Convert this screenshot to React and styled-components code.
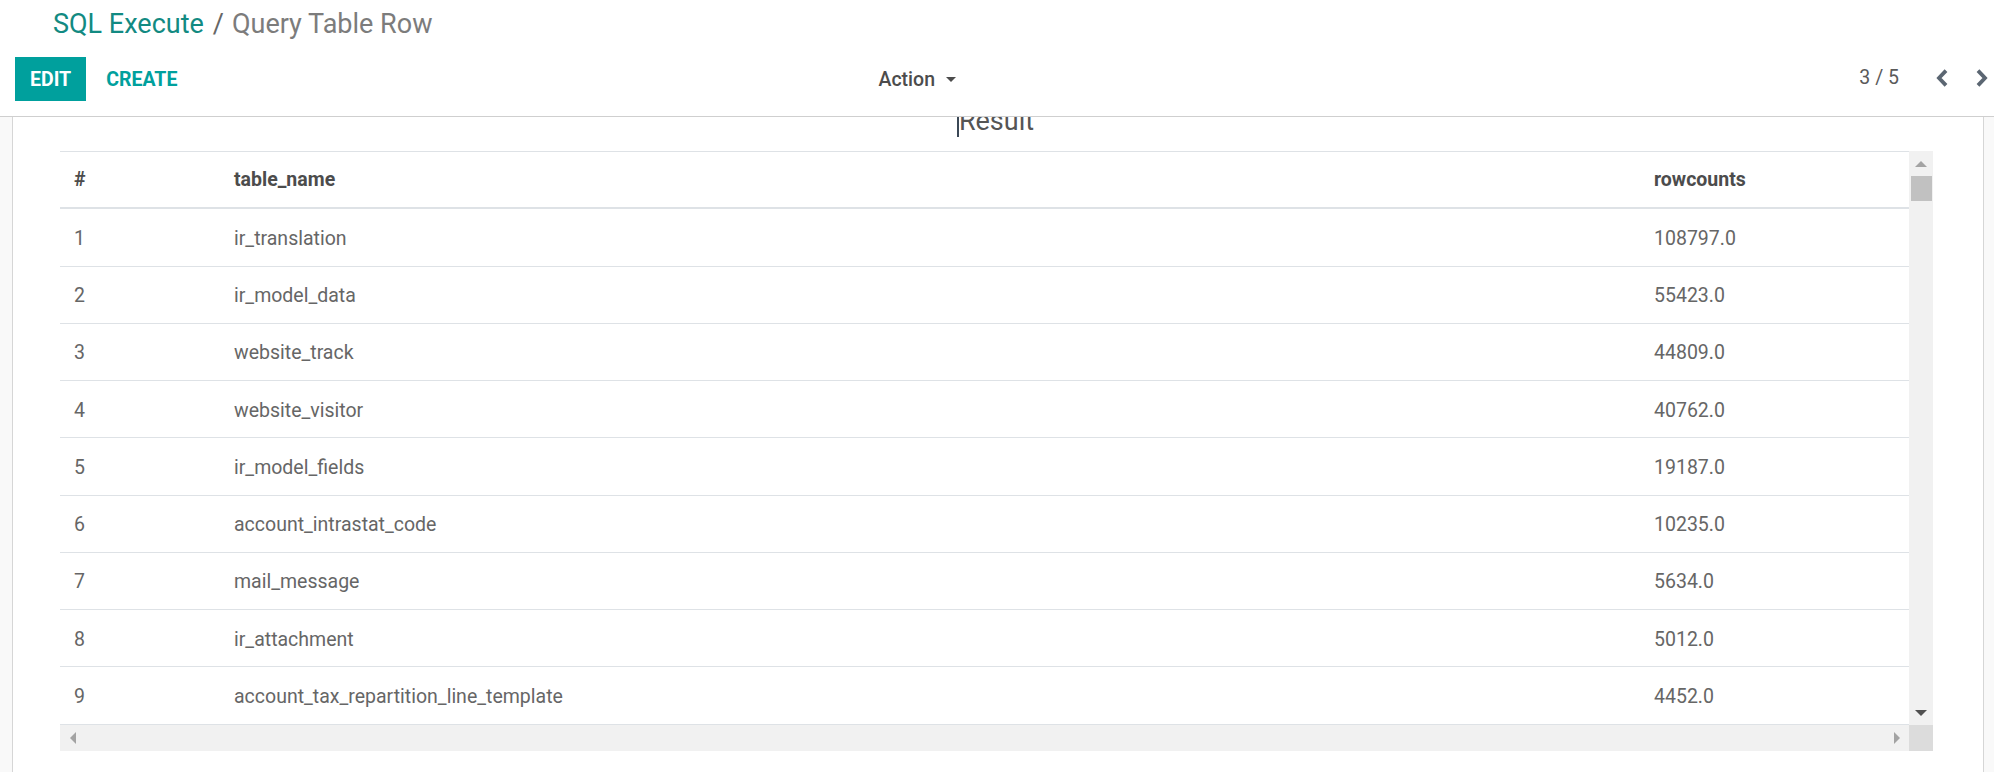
import React, { useLayoutEffect, useRef } from "react";
import styled, { createGlobalStyle } from "styled-components";

const GlobalStyle = createGlobalStyle`
  html, body { margin: 0; padding: 0; }
  body {
    font-family: Roboto, "Noto Sans", "Liberation Sans", sans-serif;
    background: #ffffff;
    -webkit-font-smoothing: antialiased;
  }
  * { box-sizing: border-box; }
`;

const Page = styled.div`
  height: 772px;
  display: flex;
  flex-direction: column;
  overflow: hidden;
`;

const ControlPanel = styled.header`
  flex-shrink: 0;
  background: #ffffff;
  border-bottom: 1px solid #cfcfcf;
  padding: 8px 0 15px;
  display: flex;
  flex-direction: column;
`;

const Breadcrumb = styled.nav`
  display: flex;
  align-items: baseline;
  padding-left: 53px;
  font-size: 27px;
  line-height: 32px;
`;

const CrumbLink = styled.a`
  color: #128a82;
  text-decoration: none;
`;

const CrumbSep = styled.span`
  color: #666666;
  margin: 0 8px 0 9px;
`;

const CrumbActive = styled.span`
  color: #7c7c7c;
`;

const BottomRow = styled.div`
  margin-top: 17px;
  height: 44px;
  display: flex;
`;

const LeftHalf = styled.div`
  width: 50%;
  display: flex;
  align-items: center;
  justify-content: space-between;
  padding-left: 15px;
`;

const ButtonGroup = styled.div`
  display: flex;
  align-items: center;
  gap: 5px;
  height: 100%;
`;

const Button = styled.button`
  height: 44px;
  padding: 0 15px;
  border: none;
  border-radius: 0;
  font-family: inherit;
  font-size: 19.5px;
  font-weight: 700;
  text-transform: uppercase;
  cursor: pointer;
  background: ${(p) => (p.$primary ? "#00a09d" : "transparent")};
  color: ${(p) => (p.$primary ? "#ffffff" : "#00a09d")};
`;

const ActionToggle = styled.button`
  display: flex;
  align-items: center;
  border: none;
  background: transparent;
  padding: 0 12px;
  margin-right: 29px;
  font-family: inherit;
  font-size: 19.5px;
  font-weight: 500;
  color: #4c4c4c;
  cursor: pointer;
`;

const Caret = styled.span`
  display: inline-block;
  margin-left: 11px;
  width: 0;
  height: 0;
  border-left: 5px solid transparent;
  border-right: 5px solid transparent;
  border-top: 5px solid #4c4c4c;
`;

const RightHalf = styled.div`
  width: 50%;
  display: flex;
  align-items: center;
  justify-content: flex-end;
  padding-right: 6px;
`;

const PagerValue = styled.span`
  font-size: 19.5px;
  color: #5a5a5a;
  margin-right: 37px;
  margin-top: -3px;
`;

const PagerButton = styled.button`
  display: flex;
  padding: 0;
  border: none;
  background: transparent;
  cursor: pointer;
  margin-top: -3px;
  & + & { margin-left: 28px; }
`;

const Body = styled.main`
  flex: 1;
  overflow: hidden;
  background: #f9f9f9;
  padding: 0 10px 0 12px;
`;

const Sheet = styled.section`
  background: #ffffff;
  border-left: 1px solid #d6d6d6;
  border-right: 1px solid #d6d6d6;
  padding: 24px 50px 48px 47px;
`;

const Title = styled.h2`
  margin: 0 0 14px;
  text-align: center;
  font-size: 27px;
  line-height: 32px;
  font-weight: 400;
  color: #555555;
`;

const TitleText = styled.span`
  position: relative;
  display: inline-block;
`;

const TextCursor = styled.span`
  position: absolute;
  left: -2px;
  top: 8px;
  width: 2px;
  height: 24px;
  background: #3b4856;
`;

const Scroller = styled.div`
  display: grid;
  grid-template-columns: 1fr 24px;
  grid-template-rows: 574px 26px;
`;

const Viewport = styled.div`
  overflow: hidden;
`;

const Table = styled.table`
  width: 100%;
  table-layout: fixed;
  border-collapse: separate;
  border-spacing: 0;
  font-size: 19.5px;
`;

const HeadCell = styled.th`
  text-align: left;
  font-weight: 700;
  color: #4c4c4c;
  padding: 13.5px 14px;
  line-height: 28.25px;
  border-top: 1px solid #dee2e6;
  border-bottom: 2px solid #dee2e6;
  white-space: nowrap;
`;

const Cell = styled.td`
  color: #666666;
  padding: 15.5px 14px 12.5px;
  line-height: 28.25px;
  border-bottom: 1px solid #dee2e6;
  white-space: nowrap;
  overflow: hidden;
`;

const VBar = styled.div`
  background: #f1f1f1;
  display: flex;
  flex-direction: column;
`;

const HBar = styled.div`
  background: #f1f1f1;
  display: flex;
  justify-content: space-between;
`;

const ArrowBox = styled.div`
  flex-shrink: 0;
  width: ${(p) => (p.$horizontal ? "25px" : "100%")};
  height: ${(p) => (p.$horizontal ? "100%" : "25px")};
  display: flex;
  align-items: center;
  justify-content: center;
  margin-top: ${(p) => (p.$end && !p.$horizontal ? "auto" : "0")};
`;

const Triangle = styled.span`
  width: 0;
  height: 0;
  ${(p) => {
    const c = p.$color;
    switch (p.$dir) {
      case "up":
        return `border-left:6px solid transparent;border-right:6px solid transparent;border-bottom:6px solid ${c};`;
      case "down":
        return `border-left:6px solid transparent;border-right:6px solid transparent;border-top:6px solid ${c};`;
      case "left":
        return `border-top:6px solid transparent;border-bottom:6px solid transparent;border-right:6px solid ${c};`;
      default:
        return `border-top:6px solid transparent;border-bottom:6px solid transparent;border-left:6px solid ${c};`;
    }
  }}
`;

const Thumb = styled.div`
  height: 25px;
  margin: 0 1px 0 2px;
  background: #c1c1c1;
`;

const Corner = styled.div`
  background: #dcdcdc;
`;

const Chevron = ({ dir }) => (
  <svg width="12" height="18" viewBox="0 0 12 18" aria-hidden="true">
    <polyline
      points={dir === "left" ? "10,1.6 3,9 10,16.4" : "2,1.6 9,9 2,16.4"}
      fill="none"
      stroke="#5b6672"
      strokeWidth="3.8"
      strokeLinejoin="miter"
    />
  </svg>
);

const rows = [
  ["1", "ir_translation", "108797.0"],
  ["2", "ir_model_data", "55423.0"],
  ["3", "website_track", "44809.0"],
  ["4", "website_visitor", "40762.0"],
  ["5", "ir_model_fields", "19187.0"],
  ["6", "account_intrastat_code", "10235.0"],
  ["7", "mail_message", "5634.0"],
  ["8", "ir_attachment", "5012.0"],
  ["9", "account_tax_repartition_line_template", "4452.0"],
  ["10", "ir_ui_view", "3896.0"],
  ["11", "res_country_state", "3204.0"],
];

export default function App() {
  const bodyRef = useRef(null);
  useLayoutEffect(() => {
    if (bodyRef.current) bodyRef.current.scrollTop = 36;
  }, []);

  return (
    <>
      <GlobalStyle />
      <Page>
        <ControlPanel>
          <Breadcrumb>
            <CrumbLink href="#">SQL Execute</CrumbLink>
            <CrumbSep>/</CrumbSep>
            <CrumbActive>Query Table Row</CrumbActive>
          </Breadcrumb>
          <BottomRow>
            <LeftHalf>
              <ButtonGroup>
                <Button $primary>Edit</Button>
                <Button>Create</Button>
              </ButtonGroup>
              <ActionToggle>
                Action
                <Caret />
              </ActionToggle>
            </LeftHalf>
            <RightHalf>
              <PagerValue>3 / 5</PagerValue>
              <PagerButton aria-label="Previous">
                <Chevron dir="left" />
              </PagerButton>
              <PagerButton aria-label="Next">
                <Chevron dir="right" />
              </PagerButton>
            </RightHalf>
          </BottomRow>
        </ControlPanel>
        <Body ref={bodyRef}>
          <Sheet>
            <Title>
              <TitleText>
                <TextCursor />
                Result
              </TitleText>
            </Title>
            <Scroller>
              <Viewport>
                <Table>
                  <colgroup>
                    <col style={{ width: 160 }} />
                    <col />
                    <col style={{ width: 269 }} />
                  </colgroup>
                  <thead>
                    <tr>
                      <HeadCell>#</HeadCell>
                      <HeadCell>table_name</HeadCell>
                      <HeadCell>rowcounts</HeadCell>
                    </tr>
                  </thead>
                  <tbody>
                    {rows.map((r) => (
                      <tr key={r[0]}>
                        <Cell>{r[0]}</Cell>
                        <Cell>{r[1]}</Cell>
                        <Cell>{r[2]}</Cell>
                      </tr>
                    ))}
                  </tbody>
                </Table>
              </Viewport>
              <VBar>
                <ArrowBox>
                  <Triangle $dir="up" $color="#a3a3a3" />
                </ArrowBox>
                <Thumb />
                <ArrowBox $end>
                  <Triangle $dir="down" $color="#505050" />
                </ArrowBox>
              </VBar>
              <HBar>
                <ArrowBox $horizontal>
                  <Triangle $dir="left" $color="#a3a3a3" />
                </ArrowBox>
                <ArrowBox $horizontal>
                  <Triangle $dir="right" $color="#a3a3a3" />
                </ArrowBox>
              </HBar>
              <Corner />
            </Scroller>
          </Sheet>
        </Body>
      </Page>
    </>
  );
}
